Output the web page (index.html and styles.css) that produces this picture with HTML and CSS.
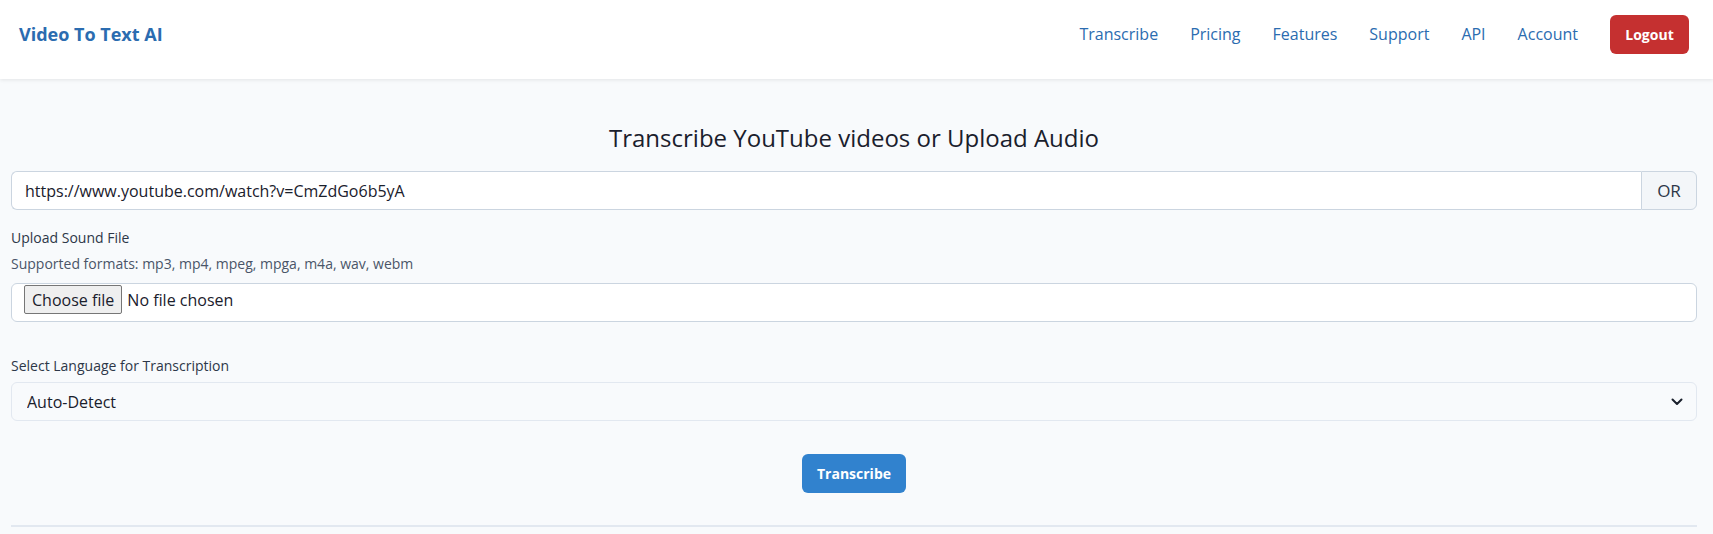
FILE: index.html
```html
<!DOCTYPE html>
<html lang="en">
<head>
<meta charset="utf-8">
<title>Video To Text AI</title>
<link rel="stylesheet" href="styles.css">
</head>
<body>
<header class="topbar">
  <a class="brand" href="#">Video To Text AI</a>
  <nav class="nav">
    <a class="nav-link" href="#">Transcribe</a>
    <a class="nav-link" href="#">Pricing</a>
    <a class="nav-link" href="#">Features</a>
    <a class="nav-link" href="#">Support</a>
    <a class="nav-link" href="#">API</a>
    <a class="nav-link" href="#">Account</a>
    <button class="btn-logout" type="button">Logout</button>
  </nav>
</header>
<main class="main">
  <h1 class="title">Transcribe YouTube videos or Upload Audio</h1>
  <div class="url-group">
    <input class="url-input" type="text" value="https://www.youtube.com/watch?v=CmZdGo6b5yA">
    <span class="addon">OR</span>
  </div>
  <div class="label">Upload Sound File</div>
  <p class="hint">Supported formats: mp3, mp4, mpeg, mpga, m4a, wav, webm</p>
  <label class="file-box">
    <input class="file-hidden" type="file">
    <span class="file-btn">Choose file</span>
    <span class="file-name">No file chosen</span>
  </label>
  <div class="label label-lang">Select Language for Transcription</div>
  <div class="select-wrap">
    <select class="select">
      <option>Auto-Detect</option>
    </select>
    <svg class="chevron" width="12" height="8" viewBox="0 0 12 8"><path d="M1.5 1.5 6 6l4.5-4.5" fill="none" stroke="#1a202c" stroke-width="2" stroke-linecap="round" stroke-linejoin="round"/></svg>
  </div>
  <div class="actions">
    <button class="btn-primary" type="button">Transcribe</button>
  </div>
  <hr class="divider">
</main>
</body>
</html>
```
FILE: styles.css
```css
* { box-sizing: border-box; }
html, body { margin: 0; padding: 0; }
body {
  background: #f8fafc;
  font-family: "Open Sans", "Noto Sans", sans-serif;
  color: #1a202c;
}
.topbar {
  height: 79px;
  background: #ffffff;
  box-shadow: 0 1px 4px rgba(0,0,0,0.09);
  display: flex;
  align-items: flex-start;
  justify-content: space-between;
  padding: 15px 24px 0 19px;
  position: relative;
}
.brand {
  color: #2b6cb0;
  font-weight: 700;
  font-size: 18px;
  line-height: 39px;
  text-decoration: none;
}
.nav {
  display: flex;
  align-items: center;
  gap: 32px;
  height: 39px;
}
.nav-link {
  color: #2b6cb0;
  font-size: 16px;
  line-height: 39px;
  text-decoration: none;
}
.btn-logout {
  font-family: inherit;
  background: #c53030;
  color: #fff;
  border: none;
  border-radius: 6px;
  font-weight: 700;
  font-size: 14px;
  height: 39px;
  width: 79px;
  padding: 0;
}
.main {
  padding: 0 16px 0 11px;
}
.title {
  margin: 0;
  padding-top: 42px;
  text-align: center;
  font-weight: 400;
  font-size: 24px;
  line-height: 34px;
  color: #1a202c;
}
.url-group {
  margin-top: 16px;
  display: flex;
  height: 39px;
}
.url-input {
  flex: 1;
  min-width: 0;
  border: 1px solid #cbd5e0;
  border-right: none;
  border-radius: 6px 0 0 6px;
  background: #fff;
  font-family: inherit;
  font-size: 16px;
  color: #1a202c;
  padding: 0 13px;
  outline: none;
}
.addon {
  width: 56px;
  border: 1px solid #cbd5e0;
  border-radius: 0 6px 6px 0;
  background: #f3f6f9;
  display: flex;
  align-items: center;
  justify-content: center;
  font-size: 17px;
  color: #2d3748;
}
.label {
  display: block;
  margin-top: 16px;
  font-size: 14px;
  line-height: 24px;
  color: #2d3748;
}
.hint {
  margin: 2px 0 0;
  font-size: 14px;
  line-height: 24px;
  color: #4a5568;
}
.file-box {
  margin-top: 7px;
  height: 39px;
  border: 1px solid #cbd5e0;
  border-radius: 6px;
  background: #fff;
  display: flex;
  align-items: flex-start;
  padding: 1px 12px 0;
  position: relative;
  font-size: 16px;
  color: #1a202c;
}
.file-hidden {
  position: absolute;
  width: 1px;
  height: 1px;
  opacity: 0;
  pointer-events: none;
}
.file-btn {
  height: 29px;
  padding: 0 7px;
  margin-right: 5px;
  background: #efefef;
  border: 1px solid #767676;
  border-radius: 2px;
  display: flex;
  align-items: center;
  line-height: 1;
}
.file-name {
  height: 29px;
  display: flex;
  align-items: center;
}
.label-lang {
  margin-top: 32px;
}
.select-wrap {
  position: relative;
  margin-top: 4px;
}
.select {
  appearance: none;
  -webkit-appearance: none;
  width: 100%;
  height: 39px;
  border: 1px solid #e2e8f0;
  border-radius: 6px;
  background: #f8fafc;
  font-family: inherit;
  font-size: 16px;
  color: #1a202c;
  padding: 0 15px;
}
.chevron {
  position: absolute;
  right: 14px;
  top: 16px;
  pointer-events: none;
}
.actions {
  display: flex;
  justify-content: center;
  margin-top: 33px;
}
.btn-primary {
  font-family: inherit;
  background: #3182ce;
  color: #fff;
  border: none;
  border-radius: 6px;
  font-weight: 700;
  font-size: 14px;
  height: 39px;
  width: 104px;
  padding: 0;
}
.divider {
  margin: 32px 0 0;
  border: none;
  border-top: 2px solid #e2e8f0;
}
```
